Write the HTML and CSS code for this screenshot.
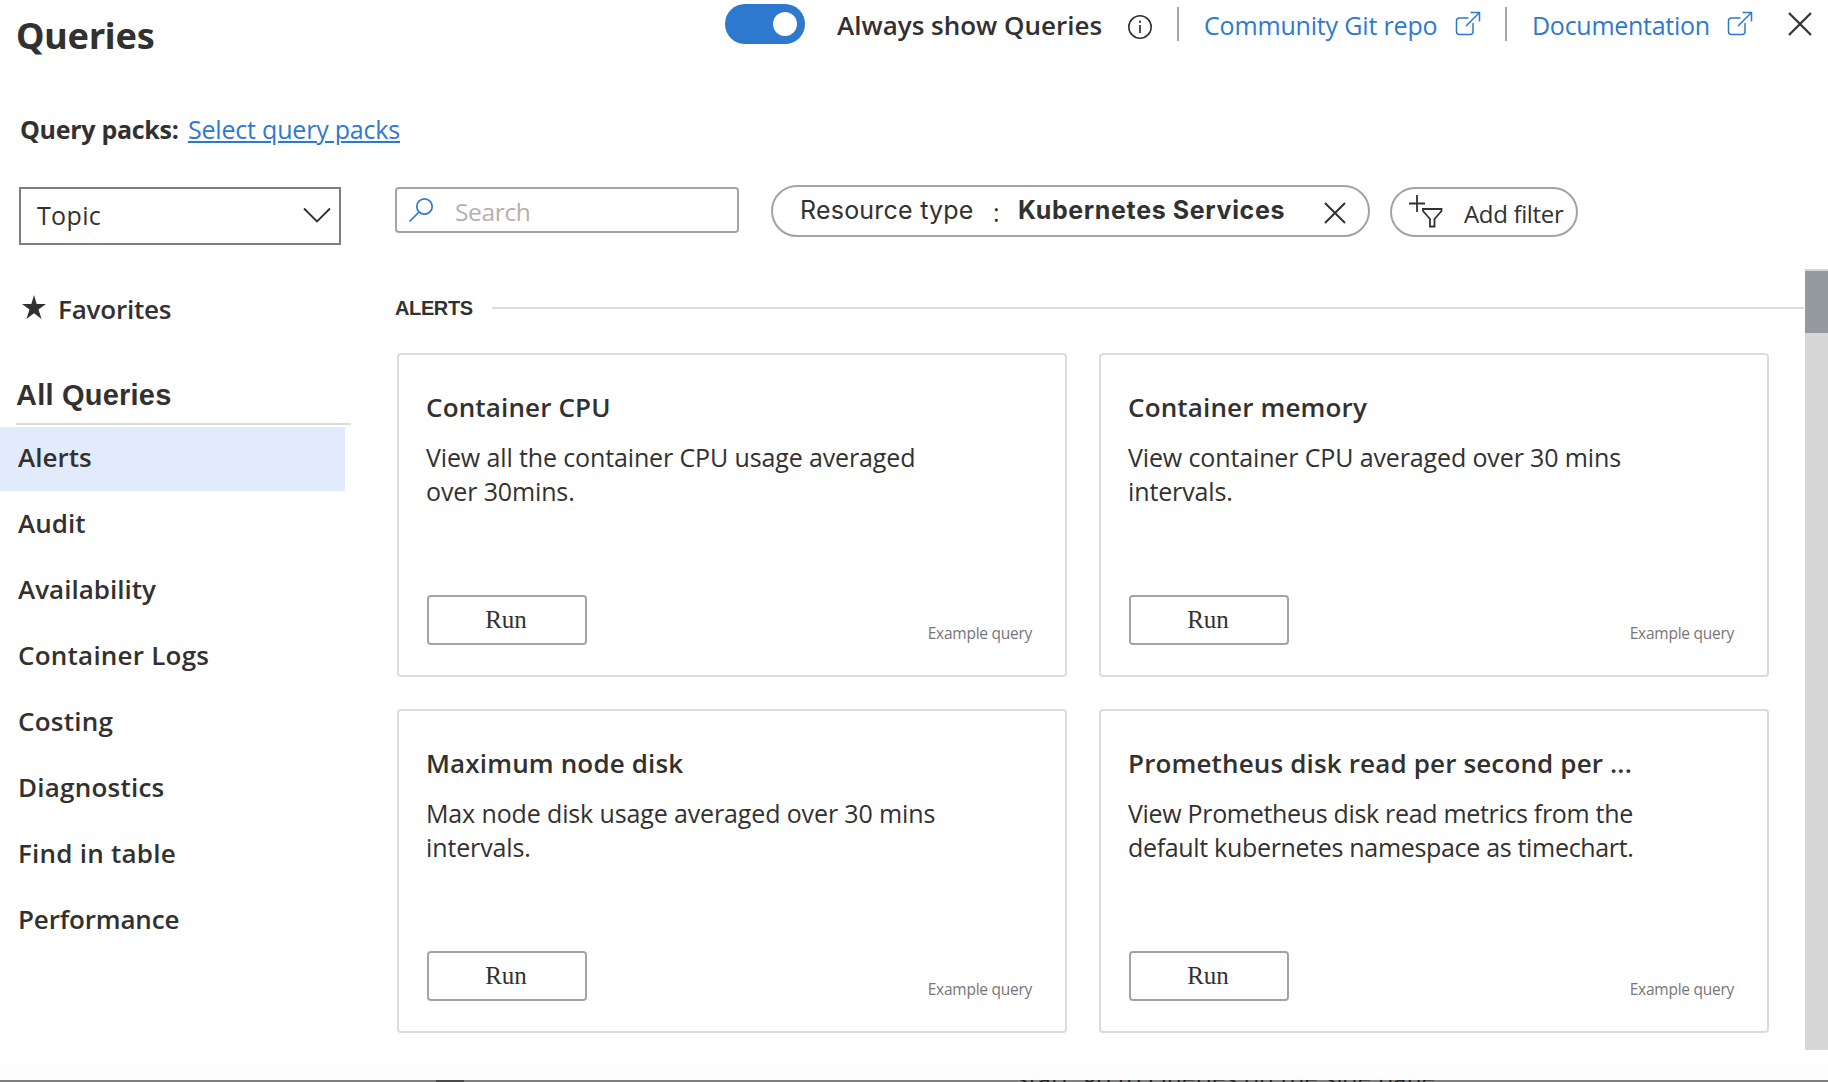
FILE: index.html
```html
<!DOCTYPE html>
<html lang="en">
<head>
<meta charset="utf-8">
<title>Queries</title>
<link rel="stylesheet" href="styles.css">
</head>
<body>
<div class="panel">
  <header class="top">
    <h1 class="title"><span class="t">Queries</span></h1>
    <div class="actions">
      <span class="toggle"><span class="knob"></span></span>
      <span class="always">Always show Queries</span>
      <svg class="info" width="26" height="26" viewBox="0 0 26 26" fill="none" stroke="#323130"><circle cx="13" cy="13" r="11.2" stroke-width="1.6"/><path d="M13 11v8" stroke-width="1.7"/><path d="M13 6.8v2" stroke-width="2"/></svg>
      <span class="sep"></span>
      <a class="link git">Community Git repo</a>
      <svg class="ext" width="26" height="26" viewBox="0 0 26 26" fill="none" stroke="#2e79d0" stroke-width="1.5"><path d="M13.5 7H4.5Q1.5 7 1.5 10V20.500Q1.500 23.500 4.500 23.500H15Q18 23.500 18 20.500V12"/><path d="M15.500 1.500H24.500V10.500M24.500 1.500L11 15"/></svg>
      <span class="sep sep2"></span>
      <a class="link docs">Documentation</a>
      <svg class="ext" width="26" height="26" viewBox="0 0 26 26" fill="none" stroke="#2e79d0" stroke-width="1.5"><path d="M13.5 7H4.5Q1.5 7 1.5 10V20.500Q1.500 23.500 4.500 23.500H15Q18 23.500 18 20.500V12"/><path d="M15.500 1.500H24.500V10.500M24.500 1.500L11 15"/></svg>
      <svg class="close" width="26" height="26" viewBox="0 0 26 26" fill="none" stroke="#323130" stroke-width="2.2"><path d="M2 2L24 24M24 2L2 24"/></svg>
    </div>
  </header>
  <div class="packs"><b class="packs-label">Query packs:</b><a class="packs-link">Select query packs</a></div>
  <div class="filters">
    <div class="topic"><span>Topic</span><svg width="28" height="16" viewBox="0 0 28 16" fill="none" stroke="#323130" stroke-width="1.9"><path d="M1 1.500L14 14.500L27 1.500"/></svg></div>
    <div class="search"><svg width="26" height="26" viewBox="0 0 26 26" fill="none" stroke="#2e79d0" stroke-width="1.7"><circle cx="16.500" cy="9.500" r="7.700"/><path d="M11 15L1.500 24.500"/></svg><span>Search</span></div>
    <div class="pill type"><span class="rt">Resource type</span><span class="colon">:</span><b class="ks">Kubernetes Services</b><svg width="22" height="22" viewBox="0 0 22 22" fill="none" stroke="#323130" stroke-width="2"><path d="M1 1L21 21M21 1L1 21"/></svg></div>
    <div class="pill add"><svg width="34" height="34" viewBox="0 0 34 34" fill="none" stroke="#323130" stroke-width="1.800"><path d="M8 0V17M0 8.500H16"/><path d="M13 14H32.500V16L25.500 24V31.500H21V24L14 16V14"/></svg><span>Add filter</span></div>
  </div>
  <div class="body">
    <nav class="side">
      <div class="fav"><svg width="24" height="24" viewBox="0 0 24 24" fill="#323130"><path d="M12 0L14.700 8.900H24L16.500 14.500L19.600 24L12 18.200L4.400 24L7.500 14.500L0 8.900H9.300Z"/></svg><span>Favorites</span></div>
      <h2 class="all"><span>All Queries</span></h2>
      <div class="item active">Alerts</div>
      <div class="item">Audit</div>
      <div class="item">Availability</div>
      <div class="item loose">Container Logs</div>
      <div class="item loose">Costing</div>
      <div class="item loose">Diagnostics</div>
      <div class="item loose">Find in table</div>
      <div class="item tight">Performance</div>
    </nav>
    <main class="main">
      <div class="section"><span>ALERTS</span><i></i></div>
      <div class="cards">
        <article class="card"><h3>Container CPU</h3><p>View all the container CPU usage averaged<br>over 30mins.</p><footer><button>Run</button><small>Example query</small></footer></article>
        <article class="card"><h3>Container memory</h3><p>View container CPU averaged over 30 mins<br>intervals.</p><footer><button>Run</button><small>Example query</small></footer></article>
        <article class="card"><h3>Maximum node disk</h3><p>Max node disk usage averaged over 30 mins<br>intervals.</p><footer><button>Run</button><small>Example query</small></footer></article>
        <article class="card"><h3>Prometheus disk read per second per ...</h3><p class="dense">View Prometheus disk read metrics from the<br>default kubernetes namespace as timechart.</p><footer><button>Run</button><small>Example query</small></footer></article>
      </div>
    </main>
    <div class="scroll"><div class="thumb"></div></div>
  </div>
</div>
<div class="under"><span>start, go to Queries on the side pane</span></div>
</body>
</html>
```
FILE: styles.css
```css
* { box-sizing: border-box; }
body { margin: 0; width: 1828px; height: 1082px; overflow: hidden; background: #fff; color: #323130; font-family: "Open Sans", "Noto Sans", sans-serif; font-size: 25px; }
h1, h2, h3, p { margin: 0; }
svg { display: block; flex: none; }
span, a, b, small { white-space: nowrap; }
.panel { height: 1080px; display: flex; flex-direction: column; background: linear-gradient(#fff 1058px, #fcfcfc); }
.top { height: 100px; display: flex; justify-content: space-between; padding-left: 16px; flex: none; }
.title { font: bold 36px/50px "Noto Sans", sans-serif; padding-top: 11px; letter-spacing: -0.15px; }
.actions { display: flex; align-items: center; height: 50px; width: 1103px; }
.toggle { width: 80px; height: 40px; border-radius: 20px; background: #2e79d0; margin-bottom: 2px; display: flex; justify-content: flex-end; align-items: center; padding-right: 8px; }
.knob { width: 24px; height: 24px; border-radius: 50%; background: #fff; }
.always { width: 268px; margin-left: 32px; font-size: 26px; font-weight: 600; }
.info { margin: 3px 0 0 22px; }
.sep { width: 2px; height: 34px; background: #a6a6a6; margin: 0 25px 3px 24px; }
.link { color: #2e79d0; }
.git { width: 234px; letter-spacing: -0.17px; }
.docs { width: 178px; letter-spacing: -0.27px; }
.ext { margin: -2px 0 0 17px; }
.close { margin: -2px 0 0 34px; }
.packs { display: flex; height: 60px; line-height: 59px; padding-left: 20px; flex: none; }
.packs-label { width: 168px; letter-spacing: -0.29px; }
.packs-link { color: #2e79d0; text-decoration: underline; letter-spacing: -0.2px; }
.filters { display: flex; height: 110px; padding: 24px 0 0 19px; align-items: flex-start; flex: none; }
.topic { width: 322px; height: 58px; border: 2px solid #7f7f7f; margin-top: 3px; display: flex; align-items: center; justify-content: space-between; padding: 0 8px 2px 16px; letter-spacing: 0.35px; }
.search { width: 344px; height: 46px; border: 2px solid #a3a3a3; border-radius: 4px; margin: 3px 0 0 54px; display: flex; align-items: center; color: #b3b0ad; padding-left: 11px; gap: 21px; }
.search span { font-size: 24.5px; letter-spacing: -0.35px; margin-top: 2px; }
.pill { border: 2px solid #a3a3a3; border-radius: 27px; display: flex; align-items: center; }
.type { width: 599px; height: 52px; margin: 1px 0 0 32px; padding-left: 27px; font-family: Inter, sans-serif; }
.rt { width: 193px; margin-top: -2px; letter-spacing: 0.22px; }
.colon { width: 25px; margin-top: 2px; font-family: "Open Sans", sans-serif; }
.ks { width: 306px; margin-top: -2px; font-weight: 700; letter-spacing: 0.63px; }
.type svg { margin-top: 4px; }
.add { width: 188px; height: 50px; margin: 3px 0 0 20px; padding-left: 17px; gap: 22px; }
.add span { font-size: 24px; letter-spacing: -0.34px; margin: 2px 0 0 -1px; }
.body { display: flex; flex: 1; min-height: 0; }
.side { width: 395px; flex: none; }
.fav { display: flex; height: 78px; padding: 0 0 0 22px; align-items: center; gap: 12px; font-size: 26px; letter-spacing: -0.2px; font-weight: 600; }
.fav svg { margin-top: -5px; }
.all { width: 335px; height: 77px; margin-left: 16px; border-bottom: 2px solid #dcdcdc; font: bold 29px/94px "Liberation Sans", sans-serif; letter-spacing: 0.22px; margin-bottom: 2px; }
.item { height: 64px; width: 345px; margin-bottom: 2px; padding-left: 18px; font-size: 26px; line-height: 61px; font-weight: 600; }
.loose { letter-spacing: 0.23px; }
.tight { letter-spacing: -0.15px; }
.active { background: #e2ebfb; }
.main { flex: 1; }
.section { display: flex; align-items: center; height: 76px; padding-right: 1px; font: bold 20px "Liberation Sans", sans-serif; }
.section span { width: 97px; letter-spacing: -0.39px; }
.section i { flex: 1; height: 2px; background: #dcdcdc; }
.cards { display: grid; grid-template-columns: 670px 670px; grid-auto-rows: 324px; gap: 32px; padding: 7px 0 0 2px; }
.card { border: 2px solid #dcdcdc; border-radius: 4px; padding: 34px 32px 30px 28px; display: flex; flex-direction: column; }
.card h3 { font-size: 26px; line-height: 36px; font-weight: 600; white-space: nowrap; letter-spacing: 0.15px; margin-left: -1px; }
.card p { line-height: 34px; margin: 15px 0 0 -1px; white-space: nowrap; letter-spacing: -0.13px; }
.card .dense { letter-spacing: -0.32px; }
.card footer { margin-top: auto; display: flex; justify-content: space-between; align-items: flex-end; }
.card button { width: 160px; height: 50px; border: 2px solid #a3a3a3; border-radius: 4px; background: #fff; color: #323130; font: 25px "Liberation Serif", serif; padding: 0 2px 1px 0; }
.card small { font-size: 15.5px; line-height: 20px; letter-spacing: -0.26px; color: #77757a; margin: 0 1px 2px 0; }
.scroll { width: 23px; height: 781px; margin-top: -1px; background: #d6d6d6; padding-top: 2px; }
.thumb { height: 62px; background: #959a9e; }
.under { height: 2px; background: linear-gradient(90deg, #7f7f7f 436px, #4a4a4a 436px 464px, #7f7f7f 464px); overflow: hidden; padding-left: 1017px; }
.under span { display: block; font-size: 24px; letter-spacing: 0.3px; line-height: 30px; color: #231f1f; margin-top: -17px; }
```
